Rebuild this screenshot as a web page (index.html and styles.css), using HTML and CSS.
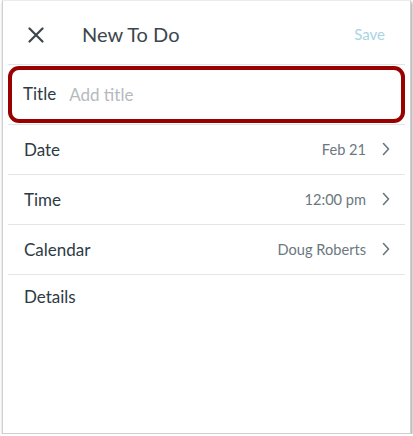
FILE: index.html
```html
<!DOCTYPE html>
<html>
<head>
<meta charset="utf-8">
<link rel="stylesheet" href="styles.css">
</head>
<body>
<div class="frame">
  <header class="topbar">
    <span class="close">
      <svg width="16" height="16" viewBox="0 0 16 16"><path d="M1.5 1.5 L14.5 14.5 M14.5 1.5 L1.5 14.5" stroke="#3d464d" stroke-width="2.2" stroke-linecap="round" fill="none"/></svg>
    </span>
    <span class="heading">New To Do</span>
    <span class="save">Save</span>
  </header>
  <div class="rule"></div>
  <div class="title-box">
    <span class="label">Title</span>
    <span class="placeholder">Add title</span>
  </div>
  <div class="rule"></div>
  <div class="row">
    <span class="label">Date</span>
    <span class="value">Feb 21</span>
    <svg class="chev" width="8" height="14" viewBox="0 0 8 14"><path d="M1.5 1.5 L6.5 7 L1.5 12.5" stroke="#6b7780" stroke-width="1.6" fill="none" stroke-linecap="round" stroke-linejoin="round"/></svg>
  </div>
  <div class="rule"></div>
  <div class="row">
    <span class="label">Time</span>
    <span class="value">12:00 pm</span>
    <svg class="chev" width="8" height="14" viewBox="0 0 8 14"><path d="M1.5 1.5 L6.5 7 L1.5 12.5" stroke="#6b7780" stroke-width="1.6" fill="none" stroke-linecap="round" stroke-linejoin="round"/></svg>
  </div>
  <div class="rule"></div>
  <div class="row">
    <span class="label">Calendar</span>
    <span class="value">Doug Roberts</span>
    <svg class="chev" width="8" height="14" viewBox="0 0 8 14"><path d="M1.5 1.5 L6.5 7 L1.5 12.5" stroke="#6b7780" stroke-width="1.6" fill="none" stroke-linecap="round" stroke-linejoin="round"/></svg>
  </div>
  <div class="rule"></div>
  <div class="details">
    <span class="label">Details</span>
  </div>
</div>
</body>
</html>
```
FILE: styles.css
```css
html, body {
  margin: 0;
  padding: 0;
  background: #ffffff;
}
body {
  font-family: Lato, "Noto Sans", sans-serif;
  color: #2d3b45;
}
.frame {
  box-sizing: border-box;
  margin: 0 0 0 2px;
  width: 409px;
  height: 434px;
  border: 1px solid #cfcfcf;
  border-top-color: #ececec;
  box-shadow: 1px 2px 3px rgba(0, 0, 0, 0.4);
  background: #fff;
  padding: 0 5px;
  display: flex;
  flex-direction: column;
}
.topbar {
  height: 63px;
  display: flex;
  align-items: center;
  padding: 0 20px 0 20px;
  flex: none;
}
.close {
  width: 16px;
  height: 16px;
  margin-top: 4px;
  display: flex;
}
.heading {
  margin-left: 38px;
  margin-top: 3px;
  font-size: 20px;
  color: #3d464d;
  flex: 1;
}
.save {
  margin-top: 3px;
  font-size: 15px;
  color: #a8d4e4;
}
.rule {
  height: 1px;
  background: #e2e4e6;
  flex: none;
}
.title-box {
  margin: 1px 0 1px 0;
  height: 57px;
  flex: none;
  box-sizing: border-box;
  border: 4px solid #990000;
  border-radius: 11px;
  display: flex;
  align-items: center;
  padding: 0 0 0 11px;
}
.title-box .label {
  font-size: 17px;
  margin-top: -3px;
}
.placeholder {
  margin-left: 13px;
  font-size: 17px;
  color: #b4babe;
}
.row {
  height: 49px;
  flex: none;
  display: flex;
  align-items: center;
  padding: 0 15px 0 16px;
}
.label {
  font-size: 17px;
  color: #2d3b45;
}
.row .label {
  flex: 1;
  margin-top: -1px;
}
.value {
  font-size: 14.6px;
  color: #6b7780;
  margin-top: -1px;
}
.chev {
  margin-left: 16px;
  margin-top: -1px;
}
.details {
  padding: 11px 16px 0 16px;
}
```
